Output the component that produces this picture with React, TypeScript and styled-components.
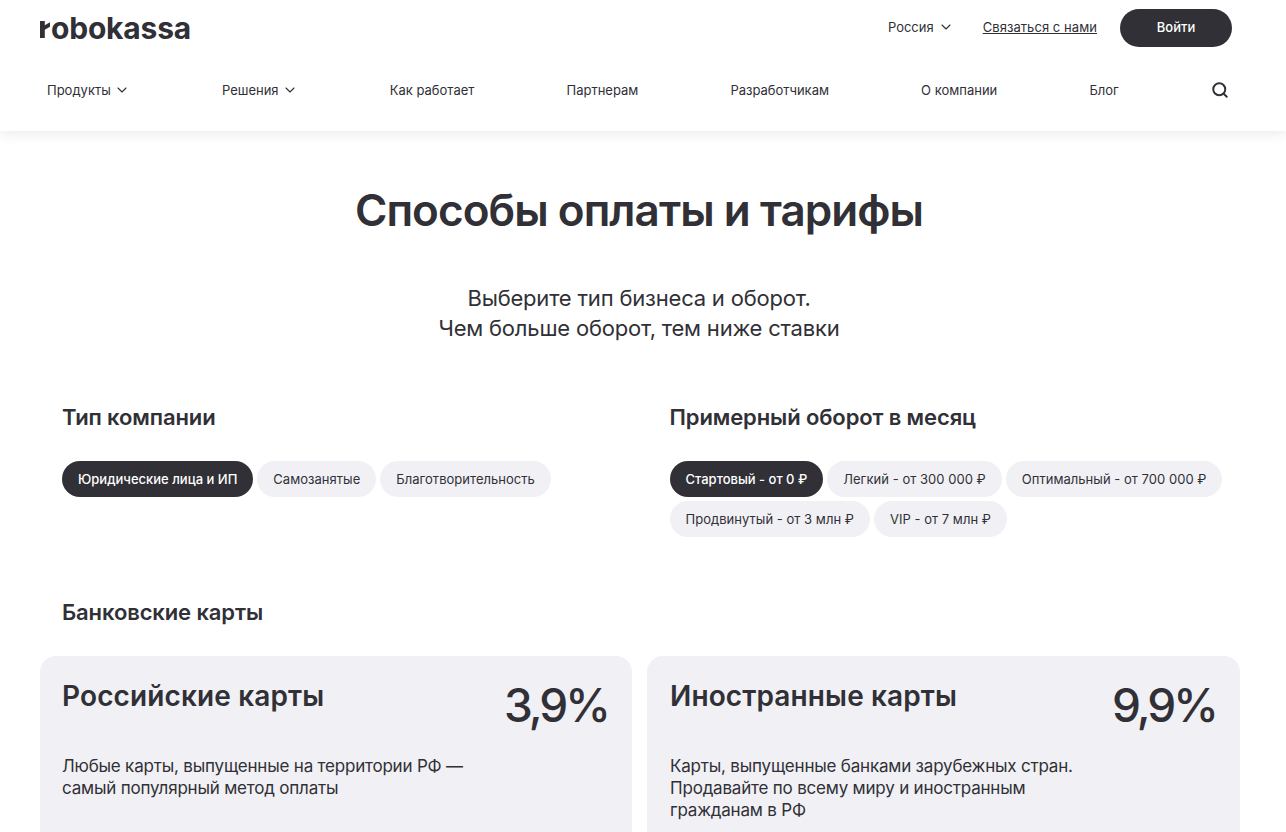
import React from "react";
import styled, { createGlobalStyle } from "styled-components";
import { ChevronDown, Search } from "lucide-react";

const dark = "#303036";
const pale = "#f1f0f5";

const App: React.FC = () => {
  return (
    <>
      <GlobalStyle />
      <Header>
        <TopRow>
          <Logo>
            <LogoMark width="10" height="17" viewBox="0 0 10 17">
              <path d="M0 0h4.8v4.2L10 1.2v4.6L4.8 8.8V17H0z" fill={dark} />
            </LogoMark>
            <LogoWord>obokassa</LogoWord>
          </Logo>
          <TopActions>
            <Region>
              Россия
              <ChevronDown size={16} strokeWidth={1.6} />
            </Region>
            <Contact href="#">Связаться с нами</Contact>
            <LoginButton>Войти</LoginButton>
          </TopActions>
        </TopRow>
        <Nav>
          <NavItem>
            Продукты
            <ChevronDown size={16} strokeWidth={1.6} />
          </NavItem>
          <NavItem>
            Решения
            <ChevronDown size={16} strokeWidth={1.6} />
          </NavItem>
          <NavItem>Как работает</NavItem>
          <NavItem>Партнерам</NavItem>
          <NavItem>Разработчикам</NavItem>
          <NavItem>О компании</NavItem>
          <NavItem>Блог</NavItem>
          <SearchButton>
            <Search size={18} strokeWidth={2.6} />
          </SearchButton>
        </Nav>
      </Header>
      <Main>
        <Title>Способы оплаты и тарифы</Title>
        <Lead>
          Выберите тип бизнеса и оборот.
          <br />
          Чем больше оборот, тем ниже ставки
        </Lead>
        <Filters>
          <FilterGroup>
            <FilterTitle>Тип компании</FilterTitle>
            <Pills>
              <Pill $active>Юридические лица и ИП</Pill>
              <Pill>Самозанятые</Pill>
              <Pill>Благотворительность</Pill>
            </Pills>
          </FilterGroup>
          <FilterGroup>
            <FilterTitle>Примерный оборот в месяц</FilterTitle>
            <Pills>
              <Pill $active>Стартовый - от 0 ₽</Pill>
              <Pill>Легкий - от 300 000 ₽</Pill>
              <Pill>Оптимальный - от 700 000 ₽</Pill>
              <Pill>Продвинутый - от 3 млн ₽</Pill>
              <Pill>VIP - от 7 млн ₽</Pill>
            </Pills>
          </FilterGroup>
        </Filters>
        <SectionTitle>Банковские карты</SectionTitle>
        <Cards>
          <Card>
            <CardHead>
              <CardTitle>Российские карты</CardTitle>
              <Rate>3,9%</Rate>
            </CardHead>
            <CardText>
              Любые карты, выпущенные на территории РФ —
              <br />
              самый популярный метод оплаты
            </CardText>
          </Card>
          <Card>
            <CardHead>
              <CardTitle>Иностранные карты</CardTitle>
              <Rate>9,9%</Rate>
            </CardHead>
            <CardText>
              Карты, выпущенные банками зарубежных стран.
              <br />
              Продавайте по всему миру и иностранным
              <br />
              гражданам в РФ
            </CardText>
          </Card>
        </Cards>
      </Main>
    </>
  );
};

export default App;

const GlobalStyle = createGlobalStyle`
  html, body {
    margin: 0;
    height: 832px;
    overflow: hidden;
    background: #fff;
  }
  body {
    font-family: Inter, "Noto Sans", sans-serif;
    color: ${dark};
  }
  * {
    box-sizing: border-box;
  }
`;

const Header = styled.header`
  height: 131px;
  padding: 9px 54px 0 40px;
  background: #fff;
  box-shadow: 0 2px 12px rgba(40, 40, 50, 0.1);
`;
const TopRow = styled.div`
  display: flex;
  justify-content: space-between;
  align-items: center;
  height: 38px;
`;
const Logo = styled.div`
  display: flex;
  align-items: flex-end;
  height: 26px;
`;
const LogoMark = styled.svg`
  margin-bottom: 3px;
  margin-right: 1px;
`;
const LogoWord = styled.span`
  font-size: 30px;
  font-weight: 700;
  line-height: 26px;
  letter-spacing: -0.2px;
`;
const TopActions = styled.div`
  display: flex;
  align-items: center;
  font-size: 13px;
`;
const Region = styled.div`
  display: flex;
  align-items: center;
  gap: 4px;
  margin: 0 29px 2px 0;
`;
const Contact = styled.a`
  color: ${dark};
  text-decoration: underline;
  letter-spacing: 0.06px;
  margin: 0 23px 2px 0;
`;
const LoginButton = styled.button`
  width: 112px;
  height: 38px;
  padding: 0 0 2px;
  border: 0;
  border-radius: 19px;
  background: ${dark};
  color: #fff;
  font: 500 13px Inter, sans-serif;
`;
const Nav = styled.nav`
  display: flex;
  justify-content: space-between;
  align-items: center;
  height: 24px;
  margin-top: 31px;
  padding: 0 3px 0 7px;
`;
const NavItem = styled.div`
  display: flex;
  align-items: center;
  gap: 3px;
  font-size: 13px;
`;
const SearchButton = styled.div`
  display: flex;
`;
const Main = styled.main`
  padding: 0 48px 0 40px;
`;
const Title = styled.h1`
  margin: 53px 0 0;
  text-align: center;
  font-size: 44px;
  line-height: 52px;
  font-weight: 600;
  letter-spacing: -0.94px;
`;
const Lead = styled.p`
  margin: 47px 0 0;
  text-align: center;
  font-size: 22px;
  line-height: 30px;
  font-weight: 400;
  letter-spacing: -0.2px;
`;
const Filters = styled.div`
  display: grid;
  grid-template-columns: 592.5px 592.5px;
  gap: 15px;
  margin-top: 60px;
`;
const FilterGroup = styled.div`
  padding-left: 22px;
`;
const FilterTitle = styled.h2`
  margin: 0 0 30px;
  font-size: 22px;
  line-height: 28px;
  font-weight: 600;
  letter-spacing: -0.12px;
`;
const Pills = styled.div`
  display: flex;
  flex-wrap: wrap;
  gap: 4px;
`;
const Pill = styled.div<{ $active?: boolean }>`
  height: 36px;
  padding: 0 16px 1px;
  border-radius: 18px;
  display: flex;
  align-items: center;
  font-size: 13px;
  letter-spacing: ${(p) => (p.$active ? "0" : "0.03px")};
  font-weight: ${(p) => (p.$active ? 500 : 400)};
  background: ${(p) => (p.$active ? dark : pale)};
  color: ${(p) => (p.$active ? "#fff" : dark)};
`;
const SectionTitle = styled.h2`
  margin: 61px 0 0 22px;
  font-size: 22px;
  line-height: 28px;
  font-weight: 600;
  letter-spacing: -0.12px;
`;
const Cards = styled.div`
  display: grid;
  grid-template-columns: 592px 593px;
  gap: 15px;
  margin-top: 30px;
`;
const Card = styled.article`
  height: 300px;
  padding: 22px 24px 0 22px;
  border-radius: 16px;
  background: ${pale};

  &:nth-child(2) {
    padding-left: 23px;
  }
`;
const CardHead = styled.div`
  display: flex;
  justify-content: space-between;
  align-items: flex-start;
`;
const CardTitle = styled.h3`
  margin: 0;
  font-size: 28px;
  line-height: 36px;
  font-weight: 600;
  letter-spacing: 0.12px;
`;
const Rate = styled.div`
  height: 36px;
  font-size: 46px;
  line-height: 54px;
  font-weight: 500;
  letter-spacing: -3px;
`;
const CardText = styled.p`
  margin: 41px 0 0;
  font-size: 17px;
  line-height: 22px;
  letter-spacing: -0.2px;
`;
